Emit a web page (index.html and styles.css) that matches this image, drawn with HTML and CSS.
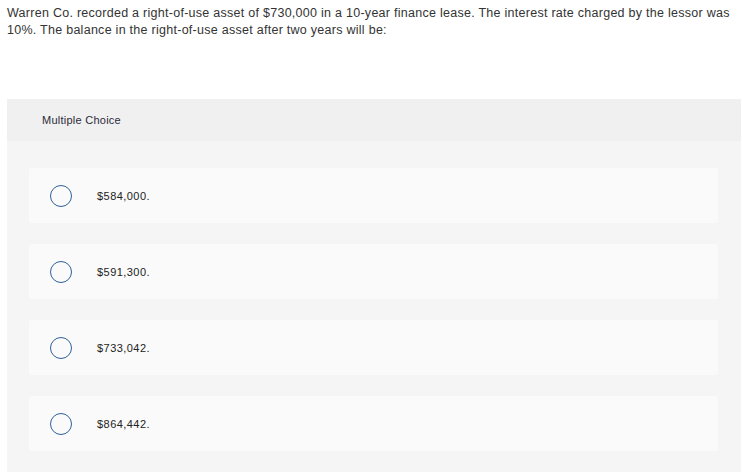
FILE: index.html
```html
<!DOCTYPE html>
<html>
<head>
<meta charset="utf-8">
<link rel="stylesheet" href="styles.css">
</head>
<body>
<div class="page">
  <p class="question">Warren Co. recorded a right-of-use asset of $730,000 in a 10-year finance lease. The interest rate charged by the lessor was 10%. The balance in the right-of-use asset after two years will be:</p>
  <div class="panel">
    <div class="panel-head">Multiple Choice</div>
    <div class="panel-body">
      <div class="choice"><span class="radio"></span><span class="label">$584,000.</span></div>
      <div class="choice"><span class="radio"></span><span class="label">$591,300.</span></div>
      <div class="choice"><span class="radio"></span><span class="label">$733,042.</span></div>
      <div class="choice"><span class="radio"></span><span class="label">$864,442.</span></div>
    </div>
  </div>
</div>
</body>
</html>
```
FILE: styles.css
```css
html, body {
  margin: 0;
  padding: 0;
  background: #fff;
}
.page {
  padding: 5px 1px 0 7px;
  font-family: "Liberation Sans", Arial, sans-serif;
  color: #333;
}
.question {
  margin: 0;
  font-size: 12.5px;
  line-height: 17px;
  letter-spacing: 0.27px;
  color: #333;
}
.panel {
  margin-top: 60px;
}
.panel-head {
  background: #f0f0f0;
  height: 42px;
  display: flex;
  align-items: center;
  padding-left: 35px;
  font-size: 11px;
  letter-spacing: 0.25px;
  color: #2b2b3a;
}
.panel-body {
  background: #f5f5f5;
  padding: 27px 23px 30px 22px;
  display: flex;
  flex-direction: column;
  gap: 21px;
}
.choice {
  background: #fafafa;
  border-radius: 3px;
  height: 55px;
  display: flex;
  align-items: center;
  padding-left: 21px;
}
.radio {
  width: 20px;
  height: 20px;
  border: 1.5px solid #2f6196;
  border-radius: 50%;
  flex: none;
}
.label {
  margin-left: 25px;
  font-size: 11px;
  letter-spacing: 0.45px;
  color: #222;
}
```
